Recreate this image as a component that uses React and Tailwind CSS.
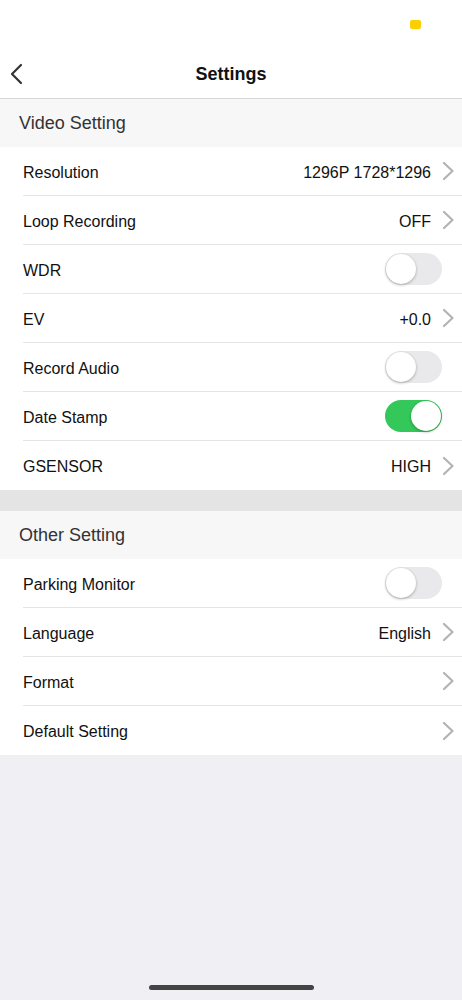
import React, { useState } from "react";

const font = { fontFamily: '"Liberation Sans", Arial, sans-serif' };

function Chevron() {
  return (
    <svg width="13" height="20" viewBox="0 0 13 20" className="ml-[11px]">
      <path d="M2 2 L10.5 10 L2 18" fill="none" stroke="#b3b3b3" strokeWidth="2.2" strokeLinecap="round" strokeLinejoin="round" />
    </svg>
  );
}

function Toggle({ on, onClick }) {
  return (
    <button
      onClick={onClick}
      className={`relative w-[57px] h-[32px] rounded-full mr-[20px] transition-colors ${on ? "bg-[#34c759]" : "bg-[#e9e9eb]"}`}
    >
      <span
        className={`absolute top-[1px] w-[30px] h-[30px] rounded-full bg-white shadow-[0_1px_3px_rgba(0,0,0,0.3)] transition-all ${on ? "left-[26px]" : "left-[1px]"}`}
      />
    </button>
  );
}

function Row({ label, value, toggle, on, onToggle, last }) {
  return (
    <div className="pl-[23px] bg-white">
      <div className={`h-[49px] flex items-center justify-between ${last ? "" : "border-b border-[#e5e5e5]"}`}>
        <span className="text-[16px] text-[#111] mt-[3px]">{label}</span>
        {toggle ? (
          <Toggle on={on} onClick={onToggle} />
        ) : (
          <div className="flex items-center pr-[7px]">
            {value && <span className="text-[16px] text-[#111] mt-[3px]">{value}</span>}
            <Chevron />
          </div>
        )}
      </div>
    </div>
  );
}

function SectionHeader({ title }) {
  return (
    <div className="h-[48px] bg-[#f7f7f7] flex items-center pl-[19px]">
      <span className="text-[18px] text-[#333]">{title}</span>
    </div>
  );
}

export default function App() {
  const [wdr, setWdr] = useState(false);
  const [audio, setAudio] = useState(false);
  const [stamp, setStamp] = useState(true);
  const [parking, setParking] = useState(false);

  return (
    <div className="w-[462px] h-[1000px] bg-[#efeff4] flex flex-col relative" style={font}>
      {/* Status bar */}
      <div className="h-[50px] bg-white relative">
        <div className="absolute left-[410px] top-[20px] w-[11px] h-[9px] rounded-[2px] bg-[#fcd000]" />
      </div>

      {/* Nav bar */}
      <div className="h-[49px] bg-white border-b border-[#d6d6d6] flex items-center justify-center relative">
        <button className="absolute left-[9px] top-[13px]">
          <svg width="16" height="22" viewBox="0 0 16 22">
            <path d="M12 2 L3 11 L12 20" fill="none" stroke="#333" strokeWidth="2.2" strokeLinecap="round" strokeLinejoin="round" />
          </svg>
        </button>
        <span className="text-[18px] font-bold text-[#111]">Settings</span>
      </div>

      <SectionHeader title="Video Setting" />
      <Row label="Resolution" value="1296P 1728*1296" />
      <Row label="Loop Recording" value="OFF" />
      <Row label="WDR" toggle on={wdr} onToggle={() => setWdr(!wdr)} />
      <Row label="EV" value="+0.0" />
      <Row label="Record Audio" toggle on={audio} onToggle={() => setAudio(!audio)} />
      <Row label="Date Stamp" toggle on={stamp} onToggle={() => setStamp(!stamp)} />
      <Row label="GSENSOR" value="HIGH" last />

      <div className="h-[21px] bg-[#e4e4e4]" />

      <SectionHeader title="Other Setting" />
      <Row label="Parking Monitor" toggle on={parking} onToggle={() => setParking(!parking)} />
      <Row label="Language" value="English" />
      <Row label="Format" />
      <Row label="Default Setting" last />

      <div className="flex-1" />
      <div className="flex justify-center pb-[10px]">
        <div className="w-[165px] h-[5px] rounded-full bg-[#444]" />
      </div>
    </div>
  );
}
